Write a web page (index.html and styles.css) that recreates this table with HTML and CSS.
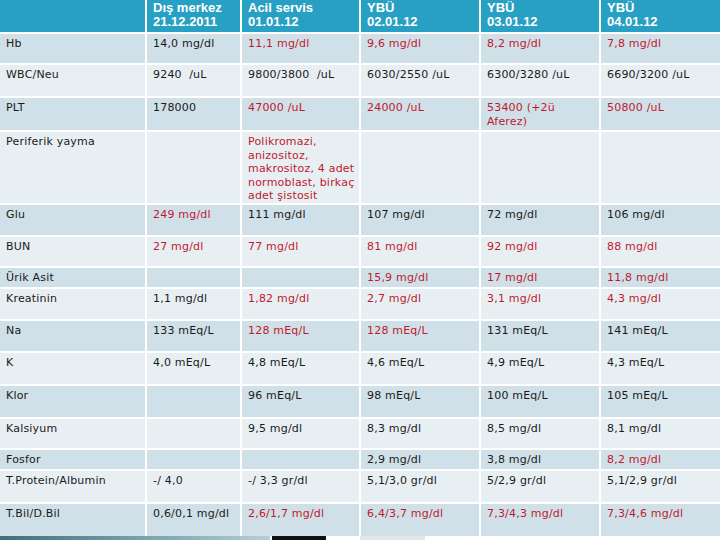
FILE: index.html
```html
<!DOCTYPE html>
<html lang="tr">
<head>
<meta charset="utf-8">
<title>Laboratuvar</title>
<link rel="stylesheet" href="styles.css">
</head>
<body>
<div class="sheet">
  <div class="table">
    <div class="h"></div>
    <div class="h">Dış merkez<br>21.12.2011</div>
    <div class="h">Acil servis<br>01.01.12</div>
    <div class="h">YBÜ<br>02.01.12</div>
    <div class="h">YBÜ<br>03.01.12</div>
    <div class="h">YBÜ<br>04.01.12</div>

    <div class="c d">Hb</div>
    <div class="c d">14,0 mg/dl</div>
    <div class="c d r">11,1 mg/dl</div>
    <div class="c d r">9,6 mg/dl</div>
    <div class="c d r">8,2 mg/dl</div>
    <div class="c d r">7,8 mg/dl</div>

    <div class="c l">WBC/Neu</div>
    <div class="c l">9240&nbsp; /uL</div>
    <div class="c l">9800/3800&nbsp; /uL</div>
    <div class="c l">6030/2550 /uL</div>
    <div class="c l">6300/3280 /uL</div>
    <div class="c l">6690/3200 /uL</div>

    <div class="c d">PLT</div>
    <div class="c d">178000</div>
    <div class="c d r">47000 /uL</div>
    <div class="c d r">24000 /uL</div>
    <div class="c d r">53400 (+2ü<br>Aferez)</div>
    <div class="c d r">50800 /uL</div>

    <div class="c l">Periferik yayma</div>
    <div class="c l"></div>
    <div class="c l r">Polikromazi,<br>anizositoz,<br>makrositoz, 4 adet<br>normoblast, birkaç<br>adet şistosit</div>
    <div class="c l"></div>
    <div class="c l"></div>
    <div class="c l"></div>

    <div class="c d">Glu</div>
    <div class="c d r">249 mg/dl</div>
    <div class="c d">111 mg/dl</div>
    <div class="c d">107 mg/dl</div>
    <div class="c d">72 mg/dl</div>
    <div class="c d">106 mg/dl</div>

    <div class="c l">BUN</div>
    <div class="c l r">27 mg/dl</div>
    <div class="c l r">77 mg/dl</div>
    <div class="c l r">81 mg/dl</div>
    <div class="c l r">92 mg/dl</div>
    <div class="c l r">88 mg/dl</div>

    <div class="c d">Ürik Asit</div>
    <div class="c d"></div>
    <div class="c d"></div>
    <div class="c d r">15,9 mg/dl</div>
    <div class="c d r">17 mg/dl</div>
    <div class="c d r">11,8 mg/dl</div>

    <div class="c l">Kreatinin</div>
    <div class="c l">1,1 mg/dl</div>
    <div class="c l r">1,82 mg/dl</div>
    <div class="c l r">2,7 mg/dl</div>
    <div class="c l r">3,1 mg/dl</div>
    <div class="c l r">4,3 mg/dl</div>

    <div class="c d">Na</div>
    <div class="c d">133 mEq/L</div>
    <div class="c d r">128 mEq/L</div>
    <div class="c d r">128 mEq/L</div>
    <div class="c d">131 mEq/L</div>
    <div class="c d">141 mEq/L</div>

    <div class="c l">K</div>
    <div class="c l">4,0 mEq/L</div>
    <div class="c l">4,8 mEq/L</div>
    <div class="c l">4,6 mEq/L</div>
    <div class="c l">4,9 mEq/L</div>
    <div class="c l">4,3 mEq/L</div>

    <div class="c d">Klor</div>
    <div class="c d"></div>
    <div class="c d">96 mEq/L</div>
    <div class="c d">98 mEq/L</div>
    <div class="c d">100 mEq/L</div>
    <div class="c d">105 mEq/L</div>

    <div class="c l">Kalsiyum</div>
    <div class="c l"></div>
    <div class="c l">9,5 mg/dl</div>
    <div class="c l">8,3 mg/dl</div>
    <div class="c l">8,5 mg/dl</div>
    <div class="c l">8,1 mg/dl</div>

    <div class="c d">Fosfor</div>
    <div class="c d"></div>
    <div class="c d"></div>
    <div class="c d">2,9 mg/dl</div>
    <div class="c d">3,8 mg/dl</div>
    <div class="c d r">8,2 mg/dl</div>

    <div class="c l">T.Protein/Albumin</div>
    <div class="c l">-/ 4,0</div>
    <div class="c l">-/ 3,3 gr/dl</div>
    <div class="c l">5,1/3,0 gr/dl</div>
    <div class="c l">5/2,9 gr/dl</div>
    <div class="c l">5,1/2,9 gr/dl</div>

    <div class="c d">T.Bil/D.Bil</div>
    <div class="c d">0,6/0,1 mg/dl</div>
    <div class="c d r">2,6/1,7 mg/dl</div>
    <div class="c d r">6,4/3,7 mg/dl</div>
    <div class="c d r">7,3/4,3 mg/dl</div>
    <div class="c d r">7,3/4,6 mg/dl</div>
  </div>
  <div class="strip">
    <div class="seg grad"></div>
    <div class="seg gap1"></div>
    <div class="seg dark"></div>
    <div class="seg gap2"></div>
    <div class="seg pale"></div>
  </div>
</div>
</body>
</html>
```

FILE: styles.css
```css
html, body {
  margin: 0;
  padding: 0;
  background: #ffffff;
}

.sheet {
  width: 720px;
  height: 540px;
  overflow: hidden;
  background: #ffffff;
}

.table {
  display: grid;
  grid-template-columns: 145px 93px 117px 118px 118px 119px;
  grid-template-rows: 32px 29px 31px 32px 71px 30px 29px 19px 30px 30px 31px 31px 29px 19px 31px 32px;
  gap: 2px;
  background: #ffffff;
}

.h {
  background: #27a0c3;
  color: #ffffff;
  font-family: "Liberation Sans", Arial, sans-serif;
  font-weight: bold;
  font-size: 13px;
  line-height: 14px;
  padding: 1px 0 0 6px;
}

.c {
  font-family: "DejaVu Sans", Verdana, sans-serif;
  font-size: 11px;
  line-height: 13.5px;
  letter-spacing: 0.2px;
  color: #1a1a1a;
  padding: 3px 0 0 6px;
}

.d {
  background: #d0e0e8;
}

.l {
  background: #e8eff3;
}

.r {
  color: #c0192c;
}

.strip {
  display: flex;
  height: 4px;
}

.seg.grad {
  width: 270px;
  background: linear-gradient(90deg, #3f6f7c, #7fa9b3 60%, #b9cfd4);
}

.seg.gap1 {
  width: 2px;
  background: #ffffff;
}

.seg.dark {
  width: 54px;
  background: #111111;
}

.seg.gap2 {
  width: 34px;
  background: #ffffff;
}

.seg.pale {
  width: 65px;
  background: #dfe9ec;
}
```
